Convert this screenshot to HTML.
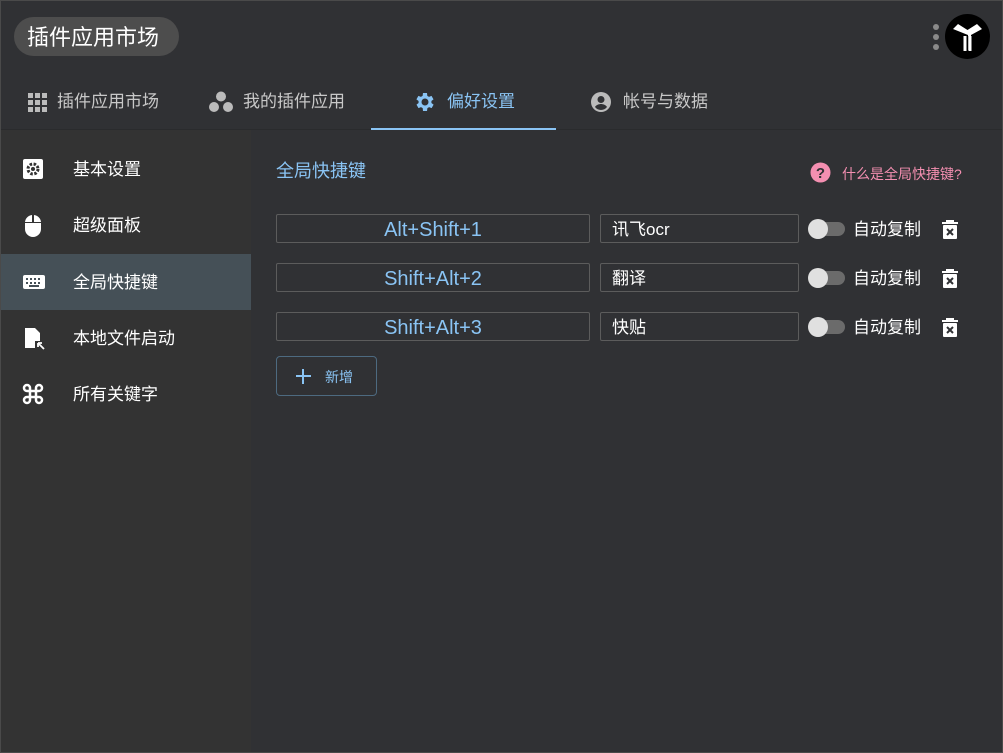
<!DOCTYPE html>
<html><head><meta charset="utf-8"><style>
*{box-sizing:border-box;margin:0;padding:0}
body{width:1003px;height:753px;overflow:hidden;background:#303134;font-family:"Liberation Sans","Noto Sans CJK SC",sans-serif;position:relative}
.frame{position:absolute;left:0;top:0;width:1003px;height:753px;border:1px solid #4a4a4a;z-index:5;pointer-events:none}
.abs{position:absolute}
.pill{left:14px;top:17px;width:165px;height:39px;border-radius:20px;background:#4d4d4d;color:#fff;font-size:22px;line-height:41px;padding-left:13px}
.tab{top:88px;height:28px;font-size:17px;color:#c8c8c8;line-height:28px;display:flex;align-items:center;gap:10px}
.side{left:1px;top:130px;width:250px;height:622px;background:#333333}
.si{left:1px;width:250px;height:56px;color:#fff;font-size:17px;line-height:58px;padding-left:72px}
.si svg{position:absolute;left:21px;top:17px}
.blue{color:#8ac4f4}
.key{left:276px;width:314px;height:29px;border:1px solid #5c5c5c;border-radius:2px;color:#8ac4f4;font-size:20px;text-align:center;line-height:31px}
.name{left:600px;width:199px;height:29px;border:1px solid #5c5c5c;border-radius:2px;color:#fff;font-size:17px;line-height:30px;padding-left:11px}
.tg{left:810px;width:35px;height:14px;border-radius:7px;background:#6b6b6b}
.tg:before{content:"";position:absolute;left:-2px;top:-3px;width:20px;height:20px;border-radius:50%;background:#e0e0e0}
.ac{left:853px;color:#fff;font-size:17px;line-height:20px}
.del{left:941px}
</style></head><body>
<div class="frame"></div>
<div class="abs pill">插件应用市场</div>
<div class="abs" style="left:933px;top:24px;width:6px;height:6px;border-radius:3px;background:#8a8a8a"></div>
<div class="abs" style="left:933px;top:34px;width:6px;height:6px;border-radius:3px;background:#8a8a8a"></div>
<div class="abs" style="left:933px;top:44px;width:6px;height:6px;border-radius:3px;background:#8a8a8a"></div>
<svg class="abs" style="left:945px;top:14px" width="45" height="45" viewBox="0 0 45 45"><circle cx="22.5" cy="22.5" r="22.5" fill="#000"/><path d="M8 15l5-5 9.5 6 9.5-6 5 5-11 6v15h-3V21z" fill="#fff"/><path d="M20 22v15M25 22v15" stroke="#fff" stroke-width="3"/><path d="M22.5 22v16" stroke="#000" stroke-width="1.5"/></svg>

<div class="abs tab" style="left:27px"><svg width="20" height="20" viewBox="0 0 20 20" fill="#bbb"><rect x="1" y="1" width="5" height="5"/><rect x="8" y="1" width="5" height="5"/><rect x="15" y="1" width="5" height="5"/><rect x="1" y="8" width="5" height="5"/><rect x="8" y="8" width="5" height="5"/><rect x="15" y="8" width="5" height="5"/><rect x="1" y="15" width="5" height="5"/><rect x="8" y="15" width="5" height="5"/><rect x="15" y="15" width="5" height="5"/></svg>插件应用市场</div>
<div class="abs tab" style="left:209px"><svg width="24" height="22" viewBox="0 0 24 22" fill="#bbb"><circle cx="12" cy="5.5" r="5"/><circle cx="5" cy="16" r="5"/><circle cx="19" cy="16" r="5"/></svg>我的插件应用</div>
<div class="abs tab blue" style="left:413px"><svg width="24" height="24" viewBox="0 0 24 24" fill="#8ac4f4"><path d="M19.4 13a7.5 7.5 0 000-2l2.1-1.6-2-3.5-2.5 1a7 7 0 00-1.7-1L15 3h-4l-.4 2.9a7 7 0 00-1.7 1l-2.5-1-2 3.5L6.6 11a7.5 7.5 0 000 2l-2.1 1.6 2 3.5 2.5-1a7 7 0 001.7 1L11 21h4l.4-2.9a7 7 0 001.7-1l2.5 1 2-3.5zM13 15.5a3.5 3.5 0 110-7 3.5 3.5 0 010 7z" transform="translate(-1 0)"/></svg>偏好设置</div>
<div class="abs tab" style="left:589px"><svg width="24" height="24" viewBox="0 0 24 24" fill="#bbb"><path d="M12 2a10 10 0 100 20 10 10 0 000-20zm0 4a3.5 3.5 0 110 7 3.5 3.5 0 010-7zm0 14a8 8 0 01-6-3c1-2 4-3 6-3s5 1 6 3a8 8 0 01-6 3z"/></svg>帐号与数据</div>
<div class="abs" style="left:1px;top:129px;width:1001px;height:1px;background:#2a2b2d"></div>
<div class="abs" style="left:371px;top:128px;width:185px;height:2px;background:#8ac4f4"></div>

<div class="abs side"></div>
<div class="abs si" style="top:141px"><svg width="22" height="22" viewBox="0 0 22 22"><rect x="1" y="1" width="20" height="20" rx="2" fill="#fff"/><circle cx="11" cy="11" r="5" fill="none" stroke="#333" stroke-width="3" stroke-dasharray="2.5 1.5"/><circle cx="11" cy="11" r="2" fill="#333"/></svg>基本设置</div>
<div class="abs si" style="top:197px"><svg width="22" height="24" viewBox="0 0 22 24" fill="#fff"><path d="M3 9h16v6a8 8 0 01-16 0zM3 8a8 8 0 017-7v7zM12 1a8 8 0 017 7h-7z"/></svg>超级面板</div>
<div class="abs si" style="top:254px;background:#455057"><svg width="24" height="22" viewBox="0 0 24 22"><rect x="1" y="4" width="22" height="14" rx="2" fill="#fff"/><g fill="#455057"><rect x="4" y="7" width="2" height="2"/><rect x="8" y="7" width="2" height="2"/><rect x="12" y="7" width="2" height="2"/><rect x="16" y="7" width="2" height="2"/><rect x="4" y="11" width="2" height="2"/><rect x="8" y="11" width="2" height="2"/><rect x="12" y="11" width="2" height="2"/><rect x="16" y="11" width="2" height="2"/><rect x="7" y="14" width="10" height="2"/></g></svg>全局快捷键</div>
<div class="abs si" style="top:310px"><svg width="24" height="24" viewBox="0 0 24 24" fill="#fff"><path d="M3 1h10l5 5v8h-5v7H3z"/><path d="M16 16l6 6M16 16v4M16 16h4" stroke="#fff" stroke-width="1.8" fill="none"/></svg>本地文件启动</div>
<div class="abs si" style="top:366px"><svg width="22" height="22" viewBox="0 0 22 22" fill="none" stroke="#fff" stroke-width="2.5"><path d="M8 8V5a3 3 0 10-3 3h12a3 3 0 10-3-3v12a3 3 0 103-3H5a3 3 0 103 3z"/></svg>所有关键字</div>

<div class="abs blue" style="left:276px;top:157px;font-size:18px">全局快捷键</div>
<svg class="abs" style="left:810px;top:162px" width="21" height="21" viewBox="0 0 21 21"><circle cx="10.5" cy="10.5" r="10" fill="#f48fb1"/><text x="10.5" y="16" text-anchor="middle" font-size="15" font-weight="bold" fill="#303134" font-family="Liberation Sans">?</text></svg>
<div class="abs" style="left:842px;top:164px;font-size:14px;color:#f48fb1">什么是全局快捷键?</div>

<div class="abs key" style="top:214px">Alt+Shift+1</div>
<div class="abs name" style="top:214px">讯飞ocr</div>
<div class="abs tg" style="top:222px"></div><div class="abs ac" style="top:220px">自动复制</div>
<div class="abs key" style="top:263px">Shift+Alt+2</div>
<div class="abs name" style="top:263px">翻译</div>
<div class="abs tg" style="top:271px"></div><div class="abs ac" style="top:269px">自动复制</div>
<div class="abs key" style="top:312px">Shift+Alt+3</div>
<div class="abs name" style="top:312px">快贴</div>
<div class="abs tg" style="top:320px"></div><div class="abs ac" style="top:318px">自动复制</div>
<svg class="abs del" style="top:218px" width="18" height="22" viewBox="0 0 18 22"><path d="M5 2h8v2h4v2H1V4h4z" fill="#fff"/><rect x="2" y="7" width="14" height="14" rx="1" fill="#fff"/><path d="M6 11l6 6M12 11l-6 6" stroke="#303134" stroke-width="2"/></svg>
<svg class="abs del" style="top:267px" width="18" height="22" viewBox="0 0 18 22"><path d="M5 2h8v2h4v2H1V4h4z" fill="#fff"/><rect x="2" y="7" width="14" height="14" rx="1" fill="#fff"/><path d="M6 11l6 6M12 11l-6 6" stroke="#303134" stroke-width="2"/></svg>
<svg class="abs del" style="top:316px" width="18" height="22" viewBox="0 0 18 22"><path d="M5 2h8v2h4v2H1V4h4z" fill="#fff"/><rect x="2" y="7" width="14" height="14" rx="1" fill="#fff"/><path d="M6 11l6 6M12 11l-6 6" stroke="#303134" stroke-width="2"/></svg>

<div class="abs" style="left:276px;top:356px;width:101px;height:40px;border:1px solid #4d6a80;border-radius:4px;color:#8ac4f4;font-size:14px;line-height:40px;padding-left:48px">新增</div>
<div class="abs" style="left:296px;top:375px;width:15px;height:2px;background:#8ac4f4"></div>
<div class="abs" style="left:302px;top:369px;width:2px;height:15px;background:#8ac4f4"></div>
</body></html>
